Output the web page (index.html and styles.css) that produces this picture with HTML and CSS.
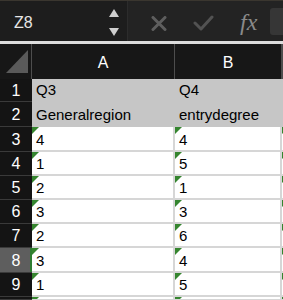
FILE: index.html
```html
<!DOCTYPE html>
<html>
<head>
  <title>Sheet</title>
  <link rel="stylesheet" href="styles.css">
</head>
<body>

  <!-- Formula bar -->
  <div class="formula-bar">
    <div class="name-box">
      <span class="cell-ref">Z8</span>
      <div class="stepper">
        <svg width="10" height="8" viewBox="0 0 10 8"><polygon points="5,0 10,8 0,8" fill="#cfcfcf"/></svg>
        <svg width="10" height="8" viewBox="0 0 10 8"><polygon points="0,0 10,0 5,8" fill="#cfcfcf"/></svg>
      </div>
    </div>
    <div class="fx-tools">
      <svg class="tool" width="16" height="15" viewBox="0 0 16 15">
        <path d="M2 1.5 L14 13.5 M14 1.5 L2 13.5" stroke="#5e5e5e" stroke-width="3" stroke-linecap="round"/>
      </svg>
      <svg class="tool" width="21" height="16" viewBox="0 0 21 16">
        <path d="M2 8 L8 14 L19 2" fill="none" stroke="#525252" stroke-width="3" stroke-linecap="round" stroke-linejoin="round"/>
      </svg>
      <span class="fx">fx</span>
      <div class="fx-input"></div>
    </div>
  </div>

  <!-- Grid -->
  <div class="sheet">
    <div class="corner"><div class="corner-mark"></div></div>
    <div class="col-head">A</div>
    <div class="col-head">B</div>
    <div class="col-head"></div>

    <div class="row-head">1</div>
    <div class="cell fill">Q3</div>
    <div class="cell fill">Q4</div>
    <div class="cell fill"></div>

    <div class="row-head">2</div>
    <div class="cell fill">Generalregion</div>
    <div class="cell fill">entrydegree</div>
    <div class="cell fill"></div>

    <div class="row-head">3</div>
    <div class="cell num">4</div>
    <div class="cell num">4</div>
    <div class="cell num"></div>

    <div class="row-head">4</div>
    <div class="cell num">1</div>
    <div class="cell num">5</div>
    <div class="cell num"></div>

    <div class="row-head">5</div>
    <div class="cell num">2</div>
    <div class="cell num">1</div>
    <div class="cell num"></div>

    <div class="row-head">6</div>
    <div class="cell num">3</div>
    <div class="cell num">3</div>
    <div class="cell num"></div>

    <div class="row-head">7</div>
    <div class="cell num">2</div>
    <div class="cell num">6</div>
    <div class="cell num"></div>

    <div class="row-head active">8</div>
    <div class="cell num">3</div>
    <div class="cell num">4</div>
    <div class="cell num"></div>

    <div class="row-head">9</div>
    <div class="cell num">1</div>
    <div class="cell num">5</div>
    <div class="cell num"></div>

    <div class="row-head"></div>
    <div class="cell num"></div>
    <div class="cell num"></div>
    <div class="cell num"></div>
  </div>

</body>
</html>
```

FILE: styles.css
```css
body {
  margin: 0;
  width: 283px;
  height: 300px;
  overflow: hidden;
  background: #1c1c1c;
  font-family: 'Liberation Sans', Arial, sans-serif;
}

/* formula bar */
.formula-bar {
  display: flex;
  height: 44px;
  border-top: 1px solid #3a362f;
  border-bottom: 3px solid #dcdcdc;
  box-sizing: border-box;
}

.name-box {
  width: 128px;
  background: #1d1d1d;
  display: flex;
  align-items: center;
  justify-content: space-between;
  padding: 0 8px 0 14px;
  box-sizing: border-box;
  border-right: 1px solid #2c2c2c;
}

.cell-ref {
  color: #e6e6e6;
  font-size: 16px;
  margin-top: 3px;
}

.stepper {
  display: flex;
  flex-direction: column;
  gap: 11px;
  margin-top: 2px;
}

.stepper svg {
  display: block;
}

.fx-tools {
  flex: 1;
  background: #232323;
  display: flex;
  align-items: center;
  padding-left: 23px;
  overflow: hidden;
}

.tool {
  display: block;
  flex-shrink: 0;
  margin-top: 4px;
}

.tool + .tool {
  margin-left: 26px;
}

.fx {
  margin-left: 26px;
  font-family: 'Liberation Serif', 'DejaVu Serif', serif;
  font-style: italic;
  font-size: 24px;
  color: #8a8a8a;
  margin-top: 2px;
}

.fx-input {
  flex-shrink: 0;
  margin-left: 13px;
  width: 20px;
  height: 27px;
  margin-top: 1px;
  background: #363636;
  border-radius: 3px;
}

/* sheet grid */
.sheet {
  display: grid;
  width: 283px;
  overflow: hidden;
  grid-template-columns: 32px 143px 107px 1px;
  grid-template-rows: 35px 23px 25px 25px 24px 24px 24px 24px 25px 24px 3px;
}

.corner, .col-head {
  background: #171717;
  border-right: 1px solid #4d4d4d;
  color: #fff;
  font-size: 16px;
  display: flex;
  align-items: center;
  justify-content: center;
  box-sizing: border-box;
  padding-top: 2px;
}

.corner {
  align-items: flex-end;
  justify-content: flex-end;
  padding: 0 3px 6px 0;
}

.corner-mark {
  width: 22px;
  height: 23px;
  background: #5a5a5a;
  clip-path: polygon(100% 0, 100% 100%, 0 100%);
}

.row-head {
  background: #141414;
  color: #fff;
  font-size: 16px;
  display: flex;
  align-items: center;
  justify-content: center;
  border-bottom: 1px solid #3a3a3a;
  box-sizing: border-box;
  padding-top: 1px;
}

.row-head.active {
  background: #5e5e5e;
  box-shadow: inset -2px 0 0 #2f7d32;
}

.cell {
  position: relative;
  background: #fff;
  color: #000;
  font-size: 15px;
  line-height: 17px;
  display: flex;
  align-items: flex-end;
  padding: 0 0 2px 4px;
  box-sizing: border-box;
  border-right: 2px solid #d6d6d6;
  border-bottom: 2px solid #d6d6d6;
  white-space: nowrap;
  overflow: hidden;
}

.cell.fill {
  background: #c6c6c6;
  border-color: #c6c6c6;
}

.cell.num::before {
  content: '';
  position: absolute;
  left: 0;
  top: 0;
  width: 7px;
  height: 7px;
  background: #35852f;
  clip-path: polygon(0 0, 100% 0, 0 100%);
}
```
